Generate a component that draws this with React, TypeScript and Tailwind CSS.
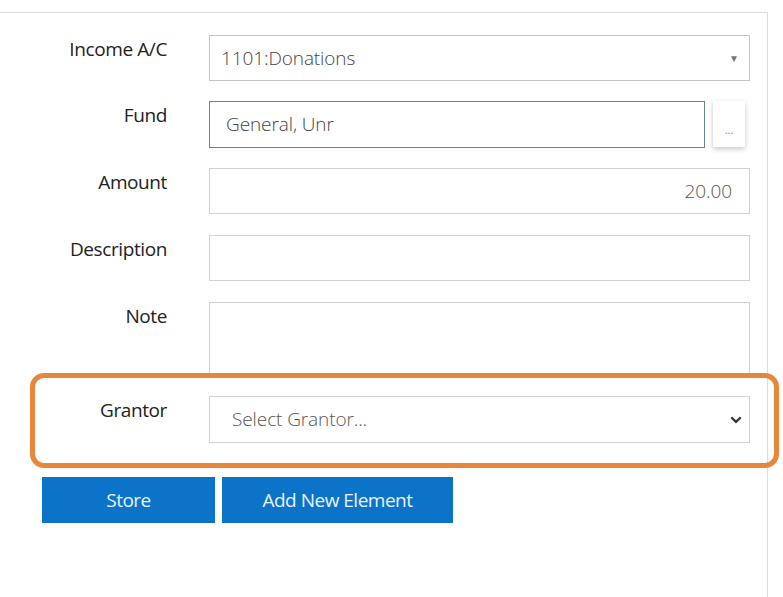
import { ChevronDown } from 'lucide-react';

const font = { fontFamily: '"Open Sans", "Liberation Sans", sans-serif' };

function Row({ label, children, top }: { label: string; children: React.ReactNode; top: string }) {
  return (
    <div className={`flex items-start ${top}`}>
      <div className="w-[167px] shrink-0 pt-[1px] text-right text-[19px] leading-[26px] tracking-[-0.4px] text-[#222]">
        {label}
      </div>
      <div className="ml-[42px] flex">{children}</div>
    </div>
  );
}

export default function App() {
  return (
    <div className="relative h-[597px] w-[783px] overflow-hidden bg-white" style={font}>
      <div className="mt-[12px] h-[585px] w-[768px] border-t border-r border-[#dcdcdc]">
        {/* Income account */}
        <Row label="Income A/C" top="mt-[22px]">
          <div className="flex h-[46px] w-[541px] items-center justify-between border border-[#c4c4c4] pl-[11px] pr-[10px]">
            <span className="text-[19px] font-light tracking-[-0.1px] text-[#444]">1101:Donations</span>
            <span className="text-[10px] text-[#777]">▼</span>
          </div>
        </Row>

        {/* Fund */}
        <Row label="Fund" top="mt-[20px]">
          <div className="flex h-[47px] w-[496px] items-center border-[1.5px] border-[#5f8893] pl-[16px]">
            <span className="text-[19px] font-light tracking-[-0.1px] text-[#444]">General, Unr</span>
          </div>
          <div className="ml-[8px] flex h-[46px] w-[32px] items-end justify-center bg-white pb-[12px] text-[11px] leading-none text-[#888] shadow-[0_2px_5px_rgba(0,0,0,0.22)]">
            ...
          </div>
        </Row>

        {/* Amount */}
        <Row label="Amount" top="mt-[20px]">
          <div className="flex h-[46px] w-[541px] items-center justify-end border border-[#d2d2d2] pr-[17px]">
            <span className="text-[19px] font-light tracking-[-0.1px] text-[#555]">20.00</span>
          </div>
        </Row>

        {/* Description */}
        <Row label="Description" top="mt-[21px]">
          <div className="h-[46px] w-[541px] border border-[#d2d2d2]" />
        </Row>

        {/* Note */}
        <Row label="Note" top="mt-[21px]">
          <div className="h-[74px] w-[541px] border border-[#d2d2d2]" />
        </Row>

        {/* Grantor */}
        <Row label="Grantor" top="mt-[20px]">
          <div className="flex h-[47px] w-[541px] items-center justify-between border border-[#d2d2d2] pl-[22px] pr-[5px]">
            <span className="text-[19px] font-light tracking-[-0.1px] text-[#555]">Select Grantor...</span>
            <ChevronDown size={16} strokeWidth={3.5} className="text-[#333]" />
          </div>
        </Row>

        {/* Actions */}
        <div className="ml-[42px] mt-[34px] flex gap-[7px]">
          <button className="h-[46px] w-[173px] bg-[#0b73c8] text-[19px] tracking-[-0.5px] text-[#e8f3ff]">Store</button>
          <button className="h-[46px] w-[231px] bg-[#0b73c8] text-[19px] tracking-[-0.5px] text-[#e8f3ff]">
            Add New Element
          </button>
        </div>
      </div>

      {/* Highlight annotation */}
      <div className="pointer-events-none absolute left-[30px] top-[373px] h-[95px] w-[749px] rounded-[14px] border-[5px] border-[#e8873a]" />
    </div>
  );
}
